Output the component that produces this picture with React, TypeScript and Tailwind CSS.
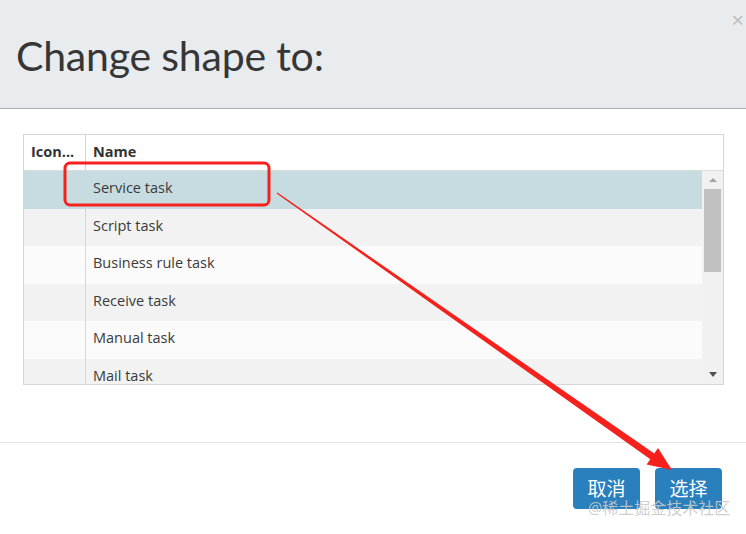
const rows = ['Service task', 'Script task', 'Business rule task', 'Receive task', 'Manual task', 'Mail task']

export default function App() {
  return (
    <div
      className="relative w-[746px] h-[534px] overflow-hidden bg-white text-[#333]"
      style={{ fontFamily: '"Open Sans", "Noto Sans CJK SC", sans-serif' }}
    >
      <div className="relative h-[109px] bg-[#e9ecef] border-b border-[#adb1b5]">
        <h1 className="pl-[16px] pt-[28px] text-[41px] leading-[56px] tracking-[-0.2px] font-normal text-[#363636]" style={{ fontFamily: 'Lato, sans-serif' }}>
          Change shape to:
        </h1>
        <span className="absolute right-[2px] top-[8px] text-[22px] leading-none text-[#bdbdbd]">×</span>
      </div>

      <div className="pl-[23px] pr-[22px] pt-[25px] h-[334px] border-b border-[#e3e3e3]">
        <div className="h-[251px] border border-[#d6d6d6] overflow-hidden text-[14.5px]">
          <div className="flex h-[36px] items-center bg-white border-b border-[#dcdcdc] font-bold">
            <div className="w-[62px] h-full flex items-center pl-[7px] pb-[2px] border-r border-[#d6d6d6]">Icon...</div>
            <div className="pl-[7px] pb-[2px]">Name</div>
          </div>
          <div className="flex">
            <div className="flex-1">
              {rows.map((r, i) => (
                <div
                  key={r}
                  className={
                    'flex h-[37.5px] ' +
                    (i === 0 ? 'bg-[#c7dce0]' : i % 2 === 1 ? 'bg-[#f2f2f2]' : 'bg-[#fbfbfb]')
                  }
                >
                  <div className="w-[62px] border-r border-[#d6d6d6]" />
                  <div className="pl-[7px] pb-[3px] flex items-center text-[#3a3a3a]">{r}</div>
                </div>
              ))}
            </div>
            <div className="w-[21px] bg-[#f1f1f1] flex flex-col items-center relative">
              <span className="mt-[7px] w-0 h-0 border-l-[4px] border-r-[4px] border-b-[4px] border-l-transparent border-r-transparent border-b-[#a3a3a3]" />
              <div className="mt-[7px] w-[17px] h-[83px] bg-[#c1c1c1]" />
              <span className="absolute top-[201px] w-0 h-0 border-l-[4px] border-r-[4px] border-t-[5px] border-l-transparent border-r-transparent border-t-[#505050]" />
            </div>
          </div>
        </div>
      </div>

      <div className="flex justify-end gap-[15px] pr-[24px] pt-[25px]">
        <button className="w-[67px] h-[41px] rounded-[4px] bg-[#2a80bd] text-white text-[19px] pt-[1px]">取消</button>
        <button className="w-[67px] h-[41px] rounded-[4px] bg-[#2a80bd] text-white text-[19px] pt-[1px]">选择</button>
      </div>

      <span className="absolute left-[588px] top-[500px] text-[16px] leading-none text-[#c9c9c9]/90">@稀土掘金技术社区</span>

      <svg className="absolute inset-0 pointer-events-none" width="746" height="534">
        <rect x="65" y="163" width="204" height="42" rx="5" fill="none" stroke="#f5211c" strokeWidth="3" />
        <polygon
          points="276.6,193.4 650.3,459.2 646.6,464.5 672,470 658,448.1 654.3,453.4 277.4,192.6"
          fill="#f5211c"
        />
      </svg>
    </div>
  )
}
